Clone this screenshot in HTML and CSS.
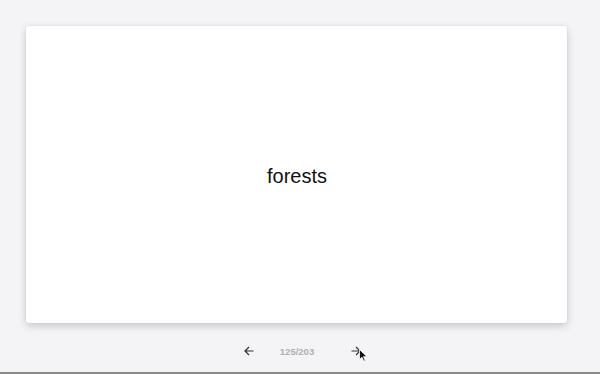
FILE: index.html
```html
<!DOCTYPE html>
<html>
<head>
<meta charset="utf-8">
<link rel="stylesheet" href="styles.css">
</head>
<body>
<div class="page">
  <div class="card"><span class="word">forests</span></div>
  <div class="nav">
    <button class="arrow">
      <svg width="12" height="12" viewBox="0 0 12 12"><path d="M10.5 6H2M6 2L2 6L6 10" fill="none" stroke="#333" stroke-width="1.2"/></svg>
    </button>
    <span class="count">125/203</span>
    <button class="arrow next">
      <svg width="12" height="12" viewBox="0 0 12 12"><path d="M1.5 6H10M6 2L10 6L6 10" fill="none" stroke="#333" stroke-width="1.2"/></svg>
    </button>
    <svg class="cursor" width="9" height="13" viewBox="0 0 9 13"><path d="M0.5 0.5V10.5L3 8.3L4.8 12.2L6.3 11.5L4.5 7.7H8Z" fill="#111" stroke="#fff" stroke-width="0.8"/></svg>
  </div>
</div>
<div class="baseline"></div>
</body>
</html>
```
FILE: styles.css
```css
html, body {
  margin: 0;
  padding: 0;
  background: #f4f3f5;
  font-family: "Liberation Sans", Arial, sans-serif;
}
.page {
  height: 372px;
  padding-top: 26px;
  box-sizing: border-box;
  display: flex;
  flex-direction: column;
  align-items: center;
}
.card {
  width: 541px;
  height: 297px;
  margin-left: -7px;
  background: #fff;
  border-radius: 3px;
  box-shadow: 0 3px 8px rgba(0,0,0,0.18), 0 0 2px rgba(0,0,0,0.08);
  display: flex;
  align-items: center;
  justify-content: center;
}
.word {
  font-size: 20px;
  color: #111;
  margin-top: 4px;
  margin-left: 1px;
}
.nav {
  position: relative;
  margin-top: 22px;
  display: flex;
  align-items: center;
  margin-left: 5px;
}
.arrow {
  border: none;
  background: none;
  padding: 0;
  width: 12px;
  height: 12px;
  display: flex;
}
.next {
  margin-left: 11px;
}
.count {
  font-size: 9.5px;
  font-weight: bold;
  color: #b0afb3;
  width: 84px;
  text-align: center;
}
.cursor {
  position: absolute;
  left: 116px;
  top: 4px;
}
.baseline {
  height: 2px;
  background: #8a8a8a;
}
```
